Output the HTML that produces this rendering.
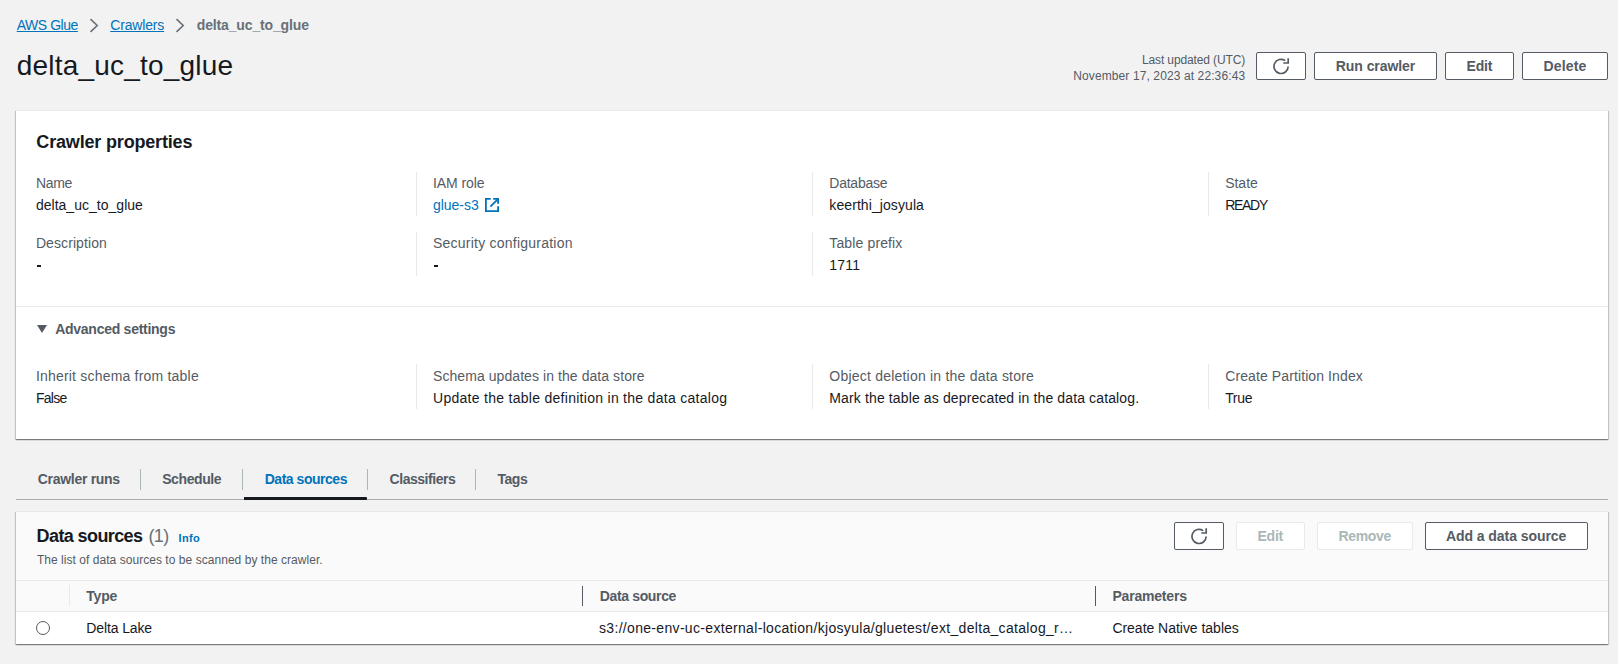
<!DOCTYPE html>
<html><head><meta charset="utf-8"><style>
html,body{margin:0;padding:0;}
body{width:1618px;height:664px;background:#f2f2f2;position:relative;overflow:hidden;font-family:"Liberation Sans",sans-serif;}
.t{position:absolute;white-space:nowrap;}
</style></head><body>
<svg style="position:absolute;left:89px;top:18px" width="10" height="15" viewBox="0 0 10 15"><path d="M1.5 1.2 L8.2 7.5 L1.5 13.8" fill="none" stroke="#687078" stroke-width="1.6"/></svg>
<svg style="position:absolute;left:175px;top:18px" width="10" height="15" viewBox="0 0 10 15"><path d="M1.5 1.2 L8.2 7.5 L1.5 13.8" fill="none" stroke="#687078" stroke-width="1.6"/></svg>
<div style="position:absolute;left:1256px;top:52px;width:50px;height:28px;box-sizing:border-box;border:1px solid #545b64;border-radius:2px;background:#fff;"></div>
<svg style="position:absolute;left:1273px;top:57.5px" width="17" height="17" viewBox="0 0 17 17"><path d="M15.2 8.6 A7.1 7.1 0 1 1 12.2 2.6" fill="none" stroke="#545b64" stroke-width="1.7"/><path d="M15.2 0.2 V5 H10.3" fill="none" stroke="#545b64" stroke-width="1.7"/></svg>
<div style="position:absolute;left:1314px;top:52px;width:123px;height:28px;box-sizing:border-box;border:1px solid #545b64;border-radius:2px;background:#fff;"></div>
<div style="position:absolute;left:1445px;top:52px;width:69px;height:28px;box-sizing:border-box;border:1px solid #545b64;border-radius:2px;background:#fff;"></div>
<div style="position:absolute;left:1522px;top:52px;width:86px;height:28px;box-sizing:border-box;border:1px solid #545b64;border-radius:2px;background:#fff;"></div>
<div style="position:absolute;left:16px;top:110px;width:1592px;height:329px;background:#fff;box-shadow:0 1px 1px 0 rgba(0,0,0,.3),1px 1px 1px 0 rgba(0,0,0,.15),-1px 1px 1px 0 rgba(0,0,0,.15);border-top:1px solid #e8e9e9;box-sizing:border-box;"></div>
<div style="position:absolute;left:416px;top:172px;width:1px;height:44px;background:#e8e9e9;"></div>
<div style="position:absolute;left:812px;top:172px;width:1px;height:44px;background:#e8e9e9;"></div>
<div style="position:absolute;left:1208px;top:172px;width:1px;height:44px;background:#e8e9e9;"></div>
<div style="position:absolute;left:416px;top:232px;width:1px;height:44px;background:#e8e9e9;"></div>
<div style="position:absolute;left:812px;top:232px;width:1px;height:44px;background:#e8e9e9;"></div>
<div style="position:absolute;left:416px;top:364px;width:1px;height:45px;background:#e8e9e9;"></div>
<div style="position:absolute;left:812px;top:364px;width:1px;height:45px;background:#e8e9e9;"></div>
<div style="position:absolute;left:1208px;top:364px;width:1px;height:45px;background:#e8e9e9;"></div>
<svg style="position:absolute;left:485px;top:198px" width="14" height="14" viewBox="0 0 14 14"><path d="M5.7 0.9 H0.9 V13.1 H13.1 V8.2" fill="none" stroke="#0073bb" stroke-width="1.8"/><path d="M8.2 0.9 H13.1 V5.8" fill="none" stroke="#0073bb" stroke-width="1.8"/><path d="M5.4 8.6 L12.6 1.4" fill="none" stroke="#0073bb" stroke-width="1.8"/></svg>
<div style="position:absolute;left:37px;top:265px;width:4px;height:1.8000000000000114px;background:#16191f;"></div>
<div style="position:absolute;left:433.6px;top:265px;width:4.0px;height:1.8000000000000114px;background:#16191f;"></div>
<div style="position:absolute;left:16px;top:306px;width:1592px;height:1px;background:#e8e9e9;"></div>
<svg style="position:absolute;left:36px;top:324px" width="12" height="10" viewBox="0 0 12 10"><path d="M1 1 H11 L6 9 Z" fill="#545b64"/></svg>
<div style="position:absolute;left:140px;top:469px;width:1px;height:21px;background:#aab7b8;"></div>
<div style="position:absolute;left:242px;top:469px;width:1px;height:21px;background:#aab7b8;"></div>
<div style="position:absolute;left:367px;top:469px;width:1px;height:21px;background:#aab7b8;"></div>
<div style="position:absolute;left:475px;top:469px;width:1px;height:21px;background:#aab7b8;"></div>
<div style="position:absolute;left:16px;top:499px;width:1592px;height:1px;background:#acaeb0;"></div>
<div style="position:absolute;left:244px;top:497px;width:123px;height:2.5px;background:#16191f;border-radius:0 1px 1px 0;"></div>
<div style="position:absolute;left:16px;top:511px;width:1592px;height:133px;background:#fafafa;box-shadow:0 1px 1px 0 rgba(0,0,0,.3),1px 1px 1px 0 rgba(0,0,0,.15),-1px 1px 1px 0 rgba(0,0,0,.15);border-top:1px solid #e8e9e9;box-sizing:border-box;"></div>
<div style="position:absolute;left:16px;top:611px;width:1592px;height:33px;background:#fff;"></div>
<div style="position:absolute;left:16px;top:580px;width:1592px;height:1px;background:#e8e9e9;"></div>
<div style="position:absolute;left:16px;top:611px;width:1592px;height:1px;background:#e8e9e9;"></div>
<div style="position:absolute;left:1174px;top:522px;width:50px;height:28px;box-sizing:border-box;border:1px solid #545b64;border-radius:2px;background:#fff;"></div>
<svg style="position:absolute;left:1191px;top:527.5px" width="17" height="17" viewBox="0 0 17 17"><path d="M15.2 8.6 A7.1 7.1 0 1 1 12.2 2.6" fill="none" stroke="#545b64" stroke-width="1.7"/><path d="M15.2 0.2 V5 H10.3" fill="none" stroke="#545b64" stroke-width="1.7"/></svg>
<div style="position:absolute;left:1236px;top:522px;width:69px;height:28px;box-sizing:border-box;border:1px solid #e8e9e9;border-radius:2px;background:#fff;"></div>
<div style="position:absolute;left:1317px;top:522px;width:96px;height:28px;box-sizing:border-box;border:1px solid #e8e9e9;border-radius:2px;background:#fff;"></div>
<div style="position:absolute;left:1425px;top:522px;width:163px;height:28px;box-sizing:border-box;border:1px solid #545b64;border-radius:2px;background:#fff;"></div>
<div style="position:absolute;left:69px;top:585px;width:1px;height:21px;background:#e8e9e9;"></div>
<div style="position:absolute;left:582px;top:586px;width:1px;height:20px;background:#545b64;"></div>
<div style="position:absolute;left:1095px;top:586px;width:1px;height:20px;background:#545b64;"></div>
<div style="position:absolute;left:36px;top:621px;width:14px;height:14px;box-sizing:border-box;border:1px solid #545b64;border-radius:50%;background:#fff"></div>
<span class="t" id="t0" style="top:17.85px;font-size:14px;line-height:14px;font-weight:400;color:#0073bb;left:16.70px;letter-spacing:-0.455px;text-decoration:underline;">AWS Glue</span>
<span class="t" id="t1" style="top:17.85px;font-size:14px;line-height:14px;font-weight:400;color:#0073bb;left:110.20px;letter-spacing:-0.154px;text-decoration:underline;">Crawlers</span>
<span class="t" id="t2" style="top:17.85px;font-size:14px;line-height:14px;font-weight:700;color:#687078;left:196.80px;letter-spacing:-0.148px;">delta_uc_to_glue</span>
<span class="t" id="t3" style="top:51.70px;font-size:28px;line-height:28px;font-weight:400;color:#16191f;left:16.70px;letter-spacing:0.206px;">delta_uc_to_glue</span>
<span class="t" id="t4" style="top:53.74px;font-size:12px;line-height:12px;font-weight:400;color:#545b64;right:372.80px;letter-spacing:-0.116px;">Last updated (UTC)</span>
<span class="t" id="t5" style="top:69.54px;font-size:12px;line-height:12px;font-weight:400;color:#545b64;right:372.80px;letter-spacing:0.110px;">November 17, 2023 at 22:36:43</span>
<span class="t" id="t6" style="top:59.15px;font-size:14px;line-height:14px;font-weight:700;color:#545b64;left:1335.80px;letter-spacing:-0.067px;">Run crawler</span>
<span class="t" id="t7" style="top:59.15px;font-size:14px;line-height:14px;font-weight:700;color:#545b64;left:1466.50px;letter-spacing:-0.188px;">Edit</span>
<span class="t" id="t8" style="top:59.15px;font-size:14px;line-height:14px;font-weight:700;color:#545b64;left:1543.60px;letter-spacing:0.145px;">Delete</span>
<span class="t" id="t9" style="top:132.76px;font-size:18px;line-height:18px;font-weight:700;color:#16191f;left:36.30px;letter-spacing:-0.170px;">Crawler properties</span>
<span class="t" id="t10" style="top:175.75px;font-size:14px;line-height:14px;font-weight:400;color:#545b64;left:35.90px;letter-spacing:-0.290px;">Name</span>
<span class="t" id="t11" style="top:197.85px;font-size:14px;line-height:14px;font-weight:400;color:#16191f;left:35.90px;letter-spacing:0.021px;">delta_uc_to_glue</span>
<span class="t" id="t12" style="top:175.75px;font-size:14px;line-height:14px;font-weight:400;color:#545b64;left:433.00px;letter-spacing:-0.078px;">IAM role</span>
<span class="t" id="t13" style="top:197.85px;font-size:14px;line-height:14px;font-weight:400;color:#0073bb;left:433.00px;letter-spacing:-0.032px;">glue-s3</span>
<span class="t" id="t14" style="top:175.75px;font-size:14px;line-height:14px;font-weight:400;color:#545b64;left:829.30px;letter-spacing:-0.242px;">Database</span>
<span class="t" id="t15" style="top:197.85px;font-size:14px;line-height:14px;font-weight:400;color:#16191f;left:829.30px;letter-spacing:0.087px;">keerthi_josyula</span>
<span class="t" id="t16" style="top:175.75px;font-size:14px;line-height:14px;font-weight:400;color:#545b64;left:1225.20px;letter-spacing:-0.021px;">State</span>
<span class="t" id="t17" style="top:197.85px;font-size:14px;line-height:14px;font-weight:400;color:#16191f;left:1225.20px;letter-spacing:-1.287px;">READY</span>
<span class="t" id="t18" style="top:235.75px;font-size:14px;line-height:14px;font-weight:400;color:#545b64;left:35.90px;letter-spacing:0.088px;">Description</span>
<span class="t" id="t19" style="top:235.75px;font-size:14px;line-height:14px;font-weight:400;color:#545b64;left:433.00px;letter-spacing:0.230px;">Security configuration</span>
<span class="t" id="t20" style="top:235.75px;font-size:14px;line-height:14px;font-weight:400;color:#545b64;left:829.30px;letter-spacing:0.134px;">Table prefix</span>
<span class="t" id="t21" style="top:257.85px;font-size:14px;line-height:14px;font-weight:400;color:#16191f;left:829.30px;letter-spacing:0.223px;">1711</span>
<span class="t" id="t22" style="top:321.85px;font-size:14px;line-height:14px;font-weight:700;color:#545b64;left:55.20px;letter-spacing:-0.264px;">Advanced settings</span>
<span class="t" id="t23" style="top:368.85px;font-size:14px;line-height:14px;font-weight:400;color:#545b64;left:35.90px;letter-spacing:0.201px;">Inherit schema from table</span>
<span class="t" id="t24" style="top:390.85px;font-size:14px;line-height:14px;font-weight:400;color:#16191f;left:35.90px;letter-spacing:-0.687px;">False</span>
<span class="t" id="t25" style="top:368.85px;font-size:14px;line-height:14px;font-weight:400;color:#545b64;left:433.00px;letter-spacing:0.070px;">Schema updates in the data store</span>
<span class="t" id="t26" style="top:390.85px;font-size:14px;line-height:14px;font-weight:400;color:#16191f;left:433.00px;letter-spacing:0.283px;">Update the table definition in the data catalog</span>
<span class="t" id="t27" style="top:368.85px;font-size:14px;line-height:14px;font-weight:400;color:#545b64;left:829.30px;letter-spacing:0.216px;">Object deletion in the data store</span>
<span class="t" id="t28" style="top:390.85px;font-size:14px;line-height:14px;font-weight:400;color:#16191f;left:829.30px;letter-spacing:0.130px;">Mark the table as deprecated in the data catalog.</span>
<span class="t" id="t29" style="top:368.85px;font-size:14px;line-height:14px;font-weight:400;color:#545b64;left:1225.20px;letter-spacing:0.104px;">Create Partition Index</span>
<span class="t" id="t30" style="top:390.85px;font-size:14px;line-height:14px;font-weight:400;color:#16191f;left:1225.20px;letter-spacing:-0.345px;">True</span>
<span class="t" id="t31" style="top:471.95px;font-size:14px;line-height:14px;font-weight:700;color:#545b64;left:37.80px;letter-spacing:-0.299px;">Crawler runs</span>
<span class="t" id="t32" style="top:471.95px;font-size:14px;line-height:14px;font-weight:700;color:#545b64;left:162.20px;letter-spacing:-0.406px;">Schedule</span>
<span class="t" id="t33" style="top:471.95px;font-size:14px;line-height:14px;font-weight:700;color:#0073bb;left:264.70px;letter-spacing:-0.470px;">Data sources</span>
<span class="t" id="t34" style="top:471.95px;font-size:14px;line-height:14px;font-weight:700;color:#545b64;left:389.60px;letter-spacing:-0.466px;">Classifiers</span>
<span class="t" id="t35" style="top:471.95px;font-size:14px;line-height:14px;font-weight:700;color:#545b64;left:497.50px;letter-spacing:-0.485px;">Tags</span>
<span class="t" id="t36" style="top:527.16px;font-size:18px;line-height:18px;font-weight:700;color:#16191f;left:36.60px;letter-spacing:-0.605px;">Data sources</span>
<span class="t" id="t37" style="top:527.16px;font-size:18px;line-height:18px;font-weight:400;color:#687078;left:148.60px;letter-spacing:-0.733px;">(1)</span>
<span class="t" id="t38" style="top:532.59px;font-size:11px;line-height:11px;font-weight:700;color:#0073bb;left:178.50px;letter-spacing:0.382px;">Info</span>
<span class="t" id="t39" style="top:553.84px;font-size:12px;line-height:12px;font-weight:400;color:#545b64;left:36.90px;letter-spacing:0.043px;">The list of data sources to be scanned by the crawler.</span>
<span class="t" id="t40" style="top:529.05px;font-size:14px;line-height:14px;font-weight:700;color:#aab7b8;left:1257.40px;letter-spacing:-0.188px;">Edit</span>
<span class="t" id="t41" style="top:529.05px;font-size:14px;line-height:14px;font-weight:700;color:#aab7b8;left:1338.50px;letter-spacing:-0.361px;">Remove</span>
<span class="t" id="t42" style="top:529.05px;font-size:14px;line-height:14px;font-weight:700;color:#545b64;left:1446.00px;letter-spacing:-0.069px;">Add a data source</span>
<span class="t" id="t43" style="top:588.85px;font-size:14px;line-height:14px;font-weight:700;color:#545b64;left:86.30px;letter-spacing:-0.235px;">Type</span>
<span class="t" id="t44" style="top:588.85px;font-size:14px;line-height:14px;font-weight:700;color:#545b64;left:599.80px;letter-spacing:-0.360px;">Data source</span>
<span class="t" id="t45" style="top:588.85px;font-size:14px;line-height:14px;font-weight:700;color:#545b64;left:1112.40px;letter-spacing:-0.188px;">Parameters</span>
<span class="t" id="t46" style="top:620.85px;font-size:14px;line-height:14px;font-weight:400;color:#16191f;left:86.30px;letter-spacing:-0.124px;">Delta Lake</span>
<span class="t" id="t47" style="top:620.85px;font-size:14px;line-height:14px;font-weight:400;color:#16191f;left:599.00px;letter-spacing:0.320px;">s3://one-env-uc-external-location/kjosyula/gluetest/ext_delta_catalog_r…</span>
<span class="t" id="t48" style="top:620.85px;font-size:14px;line-height:14px;font-weight:400;color:#16191f;left:1112.40px;letter-spacing:-0.027px;">Create Native tables</span>
</body></html>
